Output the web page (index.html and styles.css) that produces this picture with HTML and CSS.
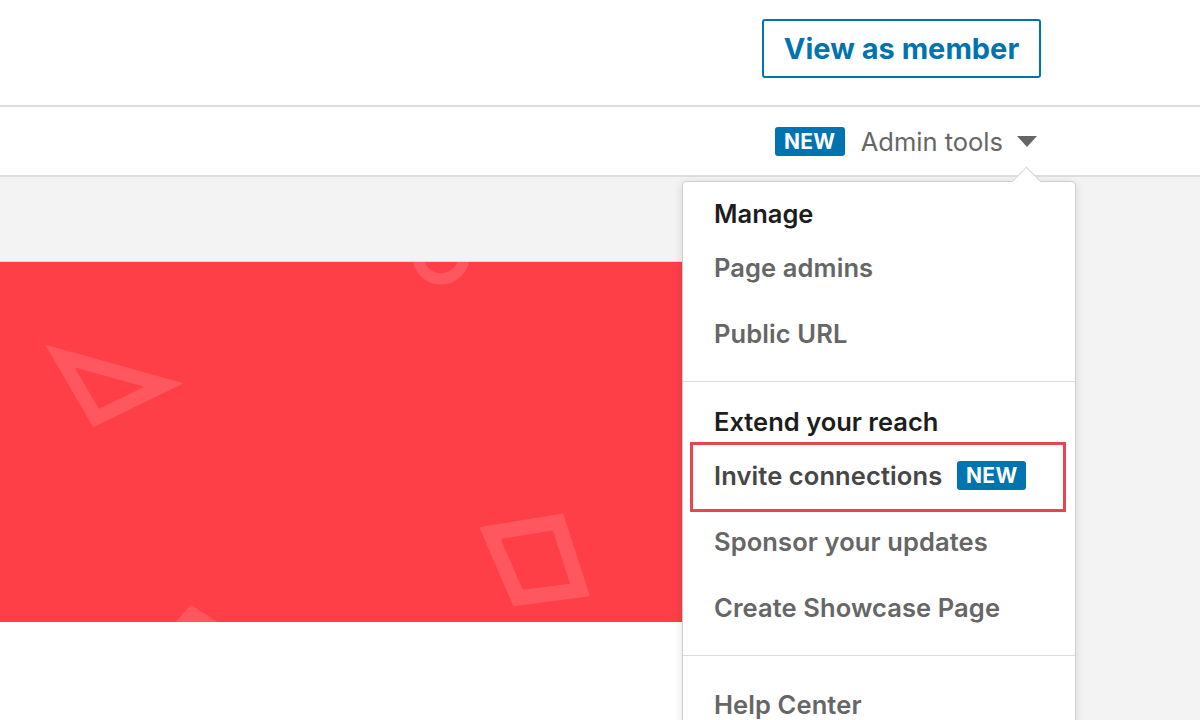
FILE: index.html
```html
<!DOCTYPE html>
<html lang="en">

<head>
  <meta charset="UTF-8">
  <meta name="viewport" content="width=device-width, initial-scale=1.0">
  <title>Company page - Admin tools</title>
  <link rel="stylesheet" href="styles.css">
</head>

<body>
  <header class="top-bar">
    <button class="btn-outline">View as member</button>
  </header>

  <nav class="sub-bar">
    <div class="admin-tools">
      <span class="badge-new">NEW</span>
      <span class="admin-label">Admin tools</span>
      <span class="caret"></span>

      <div class="admin-menu">
        <div class="menu-section first">
          <h3 class="menu-heading">Manage</h3>
          <a class="menu-item">Page admins</a>
          <a class="menu-item">Public URL</a>
        </div>
        <div class="menu-section">
          <h3 class="menu-heading">Extend your reach</h3>
          <a class="menu-item is-active highlight">Invite connections <span class="badge-new">NEW</span></a>
          <a class="menu-item">Sponsor your updates</a>
          <a class="menu-item">Create Showcase Page</a>
        </div>
        <div class="menu-section last">
          <a class="menu-item">Help Center</a>
        </div>
      </div>
    </div>
  </nav>

  <main class="page-body">
    <section class="company-card">
      <div class="cover">
        <svg class="cover-shapes" width="1000" height="360" viewBox="0 262 1000 360">
          <g fill="none" stroke="rgba(255,255,255,0.13)" stroke-width="14" stroke-linejoin="miter">
            <circle cx="441" cy="256" r="23" stroke-width="11" />
            <polygon points="60,356 164,385 96,418" />
            <polygon points="490,533 558,522 580,590 518,598" stroke-width="15" />
            <polygon points="180,628 192,614 214,628" />
          </g>
        </svg>
      </div>
      <div class="card-content"></div>
    </section>
  </main>
</body>

</html>
```

FILE: styles.css
```css
* {
  margin: 0;
  padding: 0;
  box-sizing: border-box;
}

body {
  height: 720px;
  overflow: hidden;
  font-family: Inter, "Noto Sans", sans-serif;
  background: #f3f3f3;
}

.top-bar {
  display: flex;
  justify-content: flex-end;
  align-items: flex-start;
  height: 107px;
  padding: 19px 159px 0 0;
  background: #fff;
  border-bottom: 2px solid #dedede;
}

.btn-outline {
  width: 279px;
  height: 59px;
  border: 2px solid #0073b1;
  border-radius: 3px;
  background: #fff;
  color: #0073b1;
  font: 700 29px Inter, "Noto Sans", sans-serif;
  cursor: pointer;
}

.sub-bar {
  display: flex;
  justify-content: flex-end;
  align-items: center;
  height: 70px;
  padding: 0 163px 0 0;
  background: #fff;
  border-bottom: 2px solid #dedede;
}

.admin-tools {
  position: relative;
  display: flex;
  align-items: center;
}

.badge-new {
  display: inline-flex;
  align-items: center;
  justify-content: center;
  width: 70px;
  height: 29px;
  border-radius: 3px;
  background: #0073b1;
  color: #fff;
  font-size: 21px;
  font-weight: 700;
  letter-spacing: 0.3px;
}

.admin-label {
  margin-left: 16px;
  color: #666;
  font-size: 25.5px;
  font-weight: 400;
}

.caret {
  width: 0;
  height: 0;
  margin-left: 14px;
  border-left: 10px solid transparent;
  border-right: 10px solid transparent;
  border-top: 11px solid #666;
}

/* dropdown */
.admin-menu {
  position: absolute;
  top: 55px;
  right: -39px;
  width: 394px;
  height: 600px;
  background: #fff;
  border: 1px solid #cfcfcf;
  border-radius: 4px;
  box-shadow: 0 2px 10px rgba(0, 0, 0, 0.12);
  z-index: 10;
}

.admin-menu::before {
  content: "";
  position: absolute;
  top: -11px;
  right: 38px;
  width: 20px;
  height: 20px;
  background: #fff;
  border-top: 1px solid #cfcfcf;
  border-left: 1px solid #cfcfcf;
  transform: rotate(45deg);
}

.menu-section {
  padding: 24px 0 14px;
  border-top: 1px solid #dadada;
}

.menu-section.first {
  padding-top: 16px;
  border-top: none;
}

.menu-section.last {
  padding-top: 16px;
}

.menu-heading {
  height: 32px;
  line-height: 32px;
  margin-bottom: 5px;
  padding-left: 31px;
  color: #1d1d1d;
  font-size: 25.5px;
  font-weight: 600;
}

.menu-item {
  position: relative;
  display: flex;
  align-items: center;
  gap: 15px;
  height: 66px;
  padding-left: 31px;
  color: #666;
  font-size: 25.5px;
  font-weight: 600;
  letter-spacing: 0.1px;
  cursor: pointer;
}

.menu-item.is-active {
  color: #464646;
}

.menu-item .badge-new {
  width: 69px;
}

/* annotation box drawn over the item */
.menu-item.highlight::after {
  content: "";
  position: absolute;
  top: -1px;
  bottom: -3px;
  left: 7px;
  right: 9px;
  border: 3px solid #e5464f;
}

.page-body {
  padding-top: 84px;
}

.company-card {
  width: 1000px;
  height: 600px;
  background: #fff;
  border-top: 1px solid #d8d8d8;
}

.cover {
  height: 360px;
  overflow: hidden;
  background: #fe3f48;
}

.cover-shapes {
  display: block;
}
```
